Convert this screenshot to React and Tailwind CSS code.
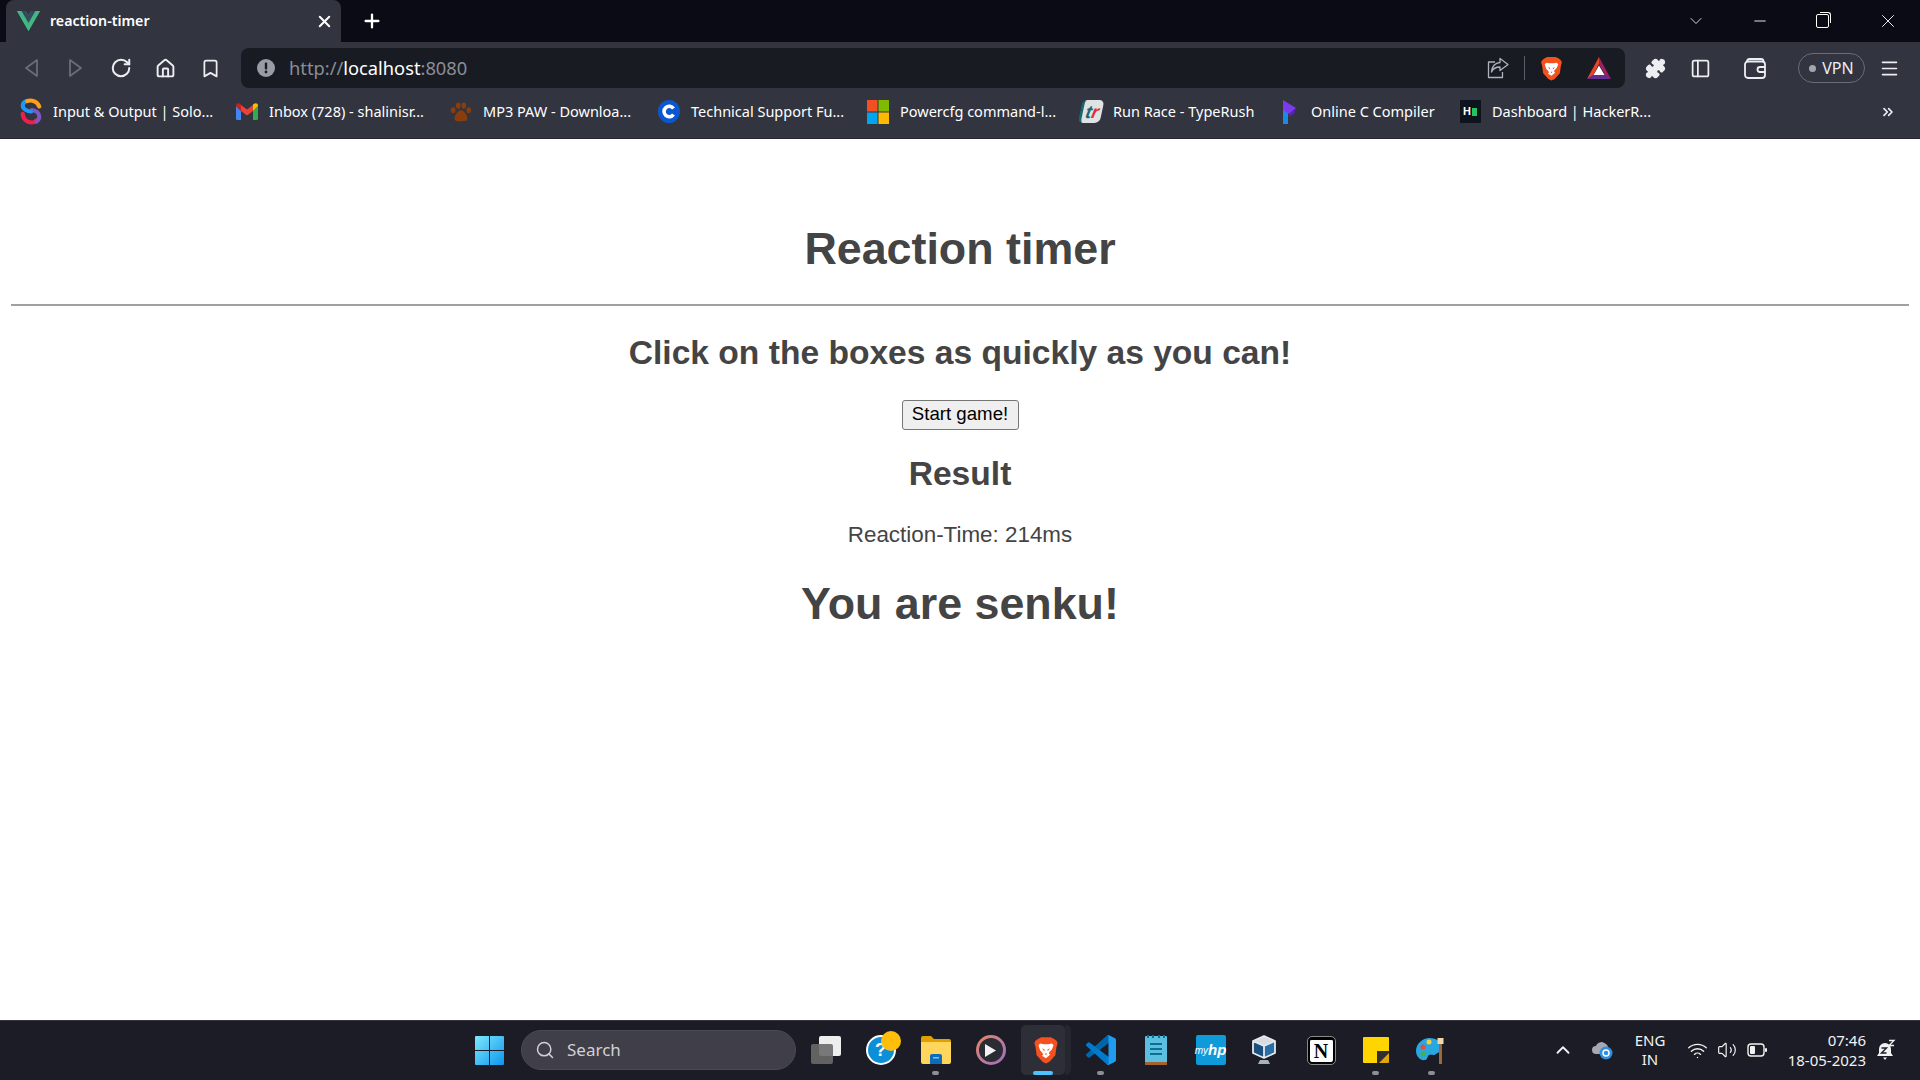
import { ChevronDown, Minus, X, Plus, RotateCw, Bookmark, Menu, ChevronUp, Wifi, Volume2, Search, PanelLeft, Puzzle, Home, ChevronsRight } from 'lucide-react'

function VueLogo({ size = 24 }) {
  return (
    <svg width={size} height={size * 0.87} viewBox="0 0 256 221">
      <path fill="#41b883" d="M204.8 0H256L128 220.8 0 0h97.92L128 51.2 157.44 0h47.36Z" />
      <path fill="#41b883" d="M0 0l128 220.8L256 0h-51.2L128 132.48 50.56 0H0Z" />
      <path fill="#35495e" d="M50.56 0L128 133.12 204.8 0h-47.36L128 51.2 97.92 0H50.56Z" />
    </svg>
  )
}

function BraveLogo({ size = 24 }) {
  return (
    <svg width={size} height={size} viewBox="0 0 24 24">
      <path fill="#f4511e" d="M5 2.500 8 1h8l3 1.500 2 1.500 1 2-1 3.500-1 7-5 5.500-3 1.500-3-1.500-5-5.500-1-7-1-3.500 1-2z" />
      <path fill="#fff" d="M7 6.500 10 7h4l3-.5 1.500 1.500-1.500 3.500-2 2-.5 1.500 1 1L12 19l-3.500-2 1-1-.5-1.500-2-2L5.500 8z" />
      <path fill="#f4511e" d="M8.500 10.500l2.300 1-.3 1.500zM15.500 10.500l-2.300 1 .3 1.500zM11 15h2l-1 1.500z" />
    </svg>
  )
}

function BatLogo() {
  return (
    <svg width="26" height="25" viewBox="0 0 26 25">
      <path fill="#e8442c" d="M13 1 1 23l6-3.500L13 8z" />
      <path fill="#9e1f63" d="M13 1l12 22-6-3.500L13 8z" />
      <path fill="#662d91" d="M1 23h24l-6-4H7z" />
      <path fill="#fff" d="M13 9.500 18.500 19h-11z" />
    </svg>
  )
}

// bookmark favicons
function SoloIcon() {
  return (
    <svg width="24" height="29" viewBox="0 0 24 29" fill="none" strokeLinecap="round">
      <path stroke="#ef1f4b" strokeWidth="4.500" d="M3 17c0 5 4 9.500 10 9.500 2 0 4-1 4.500-2" />
      <path stroke="#7e57c2" strokeWidth="4.500" d="M13 13c5 .5 8 3.500 8 7 0 2-1 4-3 5.500" />
      <path stroke="#2196f3" strokeWidth="4.500" d="M12 14.500C7 14 3 11.500 3 8c0-2.500 2-4.500 5-5" />
      <path stroke="#ffa01c" strokeWidth="4.500" d="M8 3c5-1.500 11 .5 13 6" />
    </svg>
  )
}

function GmailIcon() {
  return (
    <svg width="22" height="17" viewBox="0 0 22 17">
      <path fill="#4285f4" d="M0 3v12.500A1.500 1.500 0 0 0 1.500 17H5V8z" />
      <path fill="#34a853" d="M17 8v9h3.500a1.500 1.500 0 0 0 1.500-1.500V3z" />
      <path fill="#ea4335" d="M5 8V2l6 4.500L17 2v6l-6 4.500z" />
      <path fill="#c5221f" d="M0 3v-.500C0 .5 2.300-.500 4 .8L5 1.500V8z" />
      <path fill="#fbbc04" d="M22 3v-.500c0-2-2.300-3-4-1.700L17 1.500V8z" />
    </svg>
  )
}

function PawIcon() {
  return (
    <svg width="24" height="22" viewBox="0 0 24 22" fill="#8a3d0c">
      <ellipse cx="3.500" cy="9" rx="2.500" ry="3.300" />
      <ellipse cx="9" cy="4" rx="2.500" ry="3.500" />
      <ellipse cx="15" cy="4" rx="2.500" ry="3.500" />
      <ellipse cx="20.500" cy="9" rx="2.500" ry="3.300" />
      <path d="M12 9c-3 0-7 5-7 9 0 3 3 3.500 7 3s7 0 7-3c0-4-4-9-7-9z" />
    </svg>
  )
}

function CIcon() {
  return (
    <svg width="22" height="23" viewBox="0 0 22 23">
      <ellipse cx="11" cy="11.500" rx="11" ry="11.500" fill="#0b57d0" />
      <path fill="none" stroke="#fff" strokeWidth="3.600" d="M15.500 8.500a5.200 5.200 0 1 0 0 6" />
    </svg>
  )
}

function MsIcon() {
  return (
    <svg width="22" height="24" viewBox="0 0 22 24">
      <rect width="10.500" height="11.500" fill="#f25022" />
      <rect x="11.500" width="10.500" height="11.500" fill="#7fba00" />
      <rect y="12.500" width="10.500" height="11.500" fill="#00a4ef" />
      <rect x="11.500" y="12.500" width="10.500" height="11.500" fill="#ffb900" />
    </svg>
  )
}

function TrIcon() {
  return (
    <div className="w-[22px] h-[23px] rounded-[5px] bg-[#dfe3e4] border-l-[3px] border-[#17676f] flex items-center justify-center -skew-x-12">
      <span className="text-[18px] leading-none font-bold italic text-[#17676f] font-['Liberation_Sans',sans-serif]">t<span className="text-[#e0303a]">r</span></span>
    </div>
  )
}

function ProgramizIcon() {
  return (
    <svg width="22" height="24" viewBox="0 0 22 24">
      <path fill="#1e88e5" d="M5 10h5v14H5z" />
      <path fill="#7c3aed" d="M5 0l13 8-7 6-6-4z" />
      <path fill="#5b21b6" d="M11 14l7-6-2 6-5 3z" />
    </svg>
  )
}

function HackerIcon() {
  return (
    <div className="w-[21px] h-[23px] bg-[#0e141e] flex items-center justify-center gap-[1px]">
      <span className="text-[11px] leading-none font-bold text-white font-['Liberation_Sans',sans-serif]">H</span>
      <span className="w-[5px] h-[8px] bg-[#1ec760]" />
    </div>
  )
}

const BOOKMARKS = [
  { label: 'Input & Output | Solo...', icon: <SoloIcon />, width: 'w-[216px]' },
  { label: 'Inbox (728) - shalinisr...', icon: <GmailIcon />, width: 'w-[214px]' },
  { label: 'MP3 PAW - Downloa...', icon: <PawIcon />, width: 'w-[208px]' },
  { label: 'Technical Support Fu...', icon: <CIcon />, width: 'w-[209px]' },
  { label: 'Powercfg command-l...', icon: <MsIcon />, width: 'w-[213px]' },
  { label: 'Run Race - TypeRush', icon: <TrIcon />, width: 'w-[198px]' },
  { label: 'Online C Compiler', icon: <ProgramizIcon />, width: 'w-[181px]' },
  { label: 'Dashboard | HackerR...', icon: <HackerIcon />, width: 'w-[200px]' },
]

function TabStrip() {
  return (
    <div className="h-[42px] bg-[#0a0b14] flex text-white">
      <div className="ml-[6px] w-[335px] h-full bg-[#32343f] rounded-t-lg flex items-center pl-[11px] pr-[7px]">
        <VueLogo size={23} />
        <span className="ml-[10px] text-[14.2px] font-semibold flex-1">reaction-timer</span>
        <X size={19} strokeWidth={2.5} />
      </div>
      <div className="ml-[20px] flex items-center">
        <Plus size={22} strokeWidth={2.5} />
      </div>
      <div className="ml-auto flex">
        <div className="w-[64px] flex items-center justify-center"><ChevronDown size={20} strokeWidth={1} /></div>
        <div className="w-[64px] flex items-center justify-center"><Minus size={18} strokeWidth={1.2} /></div>
        <div className="w-[64px] flex items-center justify-center pr-[4px]">
          <div className="relative w-[13px] h-[14px] border border-white rounded-[2px]">
            <div className="absolute -top-[3px] -right-[3px] w-[11px] h-[11px] border-t border-r border-white rounded-tr-[3px]" />
          </div>
        </div>
        <div className="w-[64px] flex items-center justify-center"><X size={22} strokeWidth={1} /></div>
      </div>
    </div>
  )
}

function ToolBtn({ children, className = 'w-[45px]' }) {
  return <div className={`${className} h-full flex items-center justify-center text-[#eceef2]`}>{children}</div>
}

function Toolbar() {
  return (
    <div className="h-[46px] bg-[#32343f] flex items-center pt-[6px] pl-[8px]">
      <div className="h-[40px] flex items-center">
        <ToolBtn>
          <svg width="16" height="20" viewBox="0 0 16 20" fill="none" stroke="#6b6d78" strokeWidth="1.800" strokeLinejoin="round"><path d="M14 2v16L3 10z" /></svg>
        </ToolBtn>
        <ToolBtn>
          <svg width="16" height="20" viewBox="0 0 16 20" fill="none" stroke="#6b6d78" strokeWidth="1.800" strokeLinejoin="round"><path d="M2 2v16l11-8z" /></svg>
        </ToolBtn>
        <ToolBtn><RotateCw size={22} strokeWidth={2.2} /></ToolBtn>
        <ToolBtn><Home size={21} strokeWidth={2.2} /></ToolBtn>
        <ToolBtn><Bookmark size={21} strokeWidth={2} /></ToolBtn>
      </div>
      <div className="ml-[8px] w-[1384px] h-[40px] bg-[#191b23] rounded-lg flex items-center pl-[16px] pr-[13px]">
        <svg width="18" height="18" viewBox="0 0 18 18">
          <circle cx="9" cy="9" r="9" fill="#9a9ca5" />
          <rect x="7.800" y="3.500" width="2.400" height="7" rx="1" fill="#191b23" />
          <circle cx="9" cy="13" r="1.400" fill="#191b23" />
        </svg>
        <span className="ml-[14px] text-[18.3px] text-[#8b8d96] flex-1">http://<span className="text-white">localhost</span>:8080</span>
        <svg width="22" height="22" viewBox="0 0 22 22" fill="none" stroke="#b0b2ba" strokeWidth="1.300" strokeLinejoin="round" className="mr-[15px]">
          <path d="M8 5H1.500v15.500h14V15" />
          <path d="M13 1.500 21 7.500l-8 6v-3.500c-4 0-7 1.500-8.500 5 .5-5.500 3.500-9 8.500-9.500z" />
        </svg>
        <div className="w-px h-[24px] bg-[#5a5c66] mr-[14px]" />
        <BraveLogo size={25} />
        <div className="ml-[22px]"><BatLogo /></div>
      </div>
      <div className="flex-1 h-[40px] flex items-center text-[#eceef2]">
        <ToolBtn className="ml-[8px] w-[45px]"><Puzzle size={21} fill="#eceef2" /></ToolBtn>
        <ToolBtn className="w-[44px]"><PanelLeft size={21} strokeWidth={2} /></ToolBtn>
        <ToolBtn className="ml-[10px] w-[45px]">
          <svg width="22" height="21" viewBox="0 0 22 21" fill="none" stroke="#eceef2" strokeWidth="1.800">
            <path d="M3 3.500C3 2 4 1 5.500 1H17c1.500 0 2.500 1 2.500 2.500" />
            <rect x="1" y="3.500" width="20" height="16.500" rx="3" />
            <path d="M21 9h-5a2.500 2.500 0 0 0 0 5h5" />
          </svg>
        </ToolBtn>
        <div className="ml-[21px] w-[67px] h-[30px] rounded-full border border-[#6a6c77] flex items-center justify-center gap-[6px] text-[16px]">
          <span className="w-[7px] h-[7px] rounded-full bg-[#a3a5b0]" />
          VPN
        </div>
        <ToolBtn className="ml-[2px] w-[45px]"><Menu size={21} strokeWidth={1.8} /></ToolBtn>
      </div>
    </div>
  )
}

function BookmarksBar() {
  return (
    <div className="h-[51px] bg-[#32343f] flex items-center pl-[20px] pb-[3px] text-[14.5px] text-white border-b border-[#26272f]">
      {BOOKMARKS.map(b => (
        <div key={b.label} className={`${b.width} flex items-center`}>
          <div className="w-[22px] flex items-center justify-center shrink-0">{b.icon}</div>
          <span className="ml-[11px] whitespace-nowrap">{b.label}</span>
        </div>
      ))}
      <div className="ml-auto mr-[24px] text-[#eceef2]"><ChevronsRight size={16} strokeWidth={2.5} /></div>
    </div>
  )
}

function Page() {
  return (
    <main className="flex-1 bg-white text-center text-[#444] px-[11px] pt-[83px] font-['Liberation_Sans',Arial,sans-serif]">
      <h1 className="text-[44.8px] leading-[52px] font-bold mb-[30px]">Reaction timer</h1>
      <hr className="border-t-2 border-[#a0a0a0]" />
      <h2 className="mt-[28px] text-[33.6px] leading-[38px] font-bold">Click on the boxes as quickly as you can!</h2>
      <button className="mt-[28px] w-[117px] h-[30px] pb-[2px] bg-[#efefef] border border-[#767676] rounded-[3px] text-[18.67px] leading-none text-black">Start game!</button>
      <h2 className="mt-[25px] text-[33.6px] leading-[38px] font-bold">Result</h2>
      <p className="mt-[29px] text-[22.4px] leading-[26px]">Reaction-Time: 214ms</p>
      <h1 className="mt-[29px] text-[44.8px] leading-[52px] font-bold">You are senku!</h1>
    </main>
  )
}

function TaskSlot({ children, dot, className = '' }) {
  return (
    <div className={`relative w-[55px] h-[60px] flex items-center justify-center shrink-0 ${className}`}>
      {children}
      {dot && <span className="absolute bottom-[5px] w-[7px] h-[4px] rounded-full bg-[#8e8e96]" />}
    </div>
  )
}

function Taskbar() {
  return (
    <div className="relative h-[60px] bg-[#1c1c26] flex items-center text-white border-t border-[#33333d]">
      <div className="ml-[462px] flex items-center -mt-[1px]">
        <TaskSlot>
          <svg width="29" height="29" viewBox="0 0 29 29">
            <defs>
              <linearGradient id="win" x1="0" y1="0" x2="1" y2="1">
                <stop offset="0" stopColor="#7ee8fb" />
                <stop offset="1" stopColor="#0d95f0" />
              </linearGradient>
            </defs>
            <path fill="url(#win)" d="M0 1a1 1 0 0 1 1-1h13v14H0zM15 0h13a1 1 0 0 1 1 1v13H15zM0 15h14v14H1a1 1 0 0 1-1-1zM15 15h14v13a1 1 0 0 1-1 1H15z" />
          </svg>
        </TaskSlot>
        <div className="ml-[4px] w-[275px] h-[40px] rounded-full bg-[#3f3e49] border border-[#4a4954] flex items-center pl-[13px] text-[#d0d0d5] text-[17px]">
          <Search size={20} strokeWidth={1.8} />
          <span className="ml-[12px]">Search</span>
        </div>
        <div className="w-[2px]" />
        <TaskSlot>
          <div className="relative w-[30px] h-[28px]">
            <div className="absolute right-0 top-0 w-[22px] h-[20px] rounded-[2px] bg-[#eeeeee]" />
            <div className="absolute left-0 bottom-0 w-[22px] h-[20px] rounded-[2px] bg-[#6a6a6a]/90" />
          </div>
        </TaskSlot>
        <TaskSlot>
          <div className="relative w-[30px] h-[30px] rounded-full bg-[#0d8fd8] border-2 border-white flex items-center justify-center text-[18px] font-bold font-['Liberation_Sans',sans-serif]">
            ?
            <span className="absolute -top-[6px] -right-[7px] w-[20px] h-[20px] rounded-full bg-[#ffbe0b]" />
          </div>
        </TaskSlot>
        <TaskSlot dot>
          <svg width="30" height="28" viewBox="0 0 30 28">
            <path fill="#e0a100" d="M0 2a2 2 0 0 1 2-2h8l3 3h15a2 2 0 0 1 2 2v4H0z" />
            <path fill="#ffd65c" d="M0 6h30v20a2 2 0 0 1-2 2H2a2 2 0 0 1-2-2z" />
            <path fill="#0f6cbd" d="M9 20a2 2 0 0 1 2-2h8a2 2 0 0 1 2 2v8H9z" />
            <rect x="12" y="21" width="6" height="1.500" fill="#7cc4f0" />
          </svg>
        </TaskSlot>
        <TaskSlot>
          <div className="w-[30px] h-[30px] rounded-full bg-gradient-to-br from-[#e8845c] to-[#9b6cc4] p-[3px]">
            <div className="w-full h-full rounded-full bg-[#2b2b33] flex items-center justify-center">
              <svg width="13" height="15" viewBox="0 0 13 15"><path fill="#f2f2f2" d="M1 1v13l11-6.500z" /></svg>
            </div>
          </div>
        </TaskSlot>
        <TaskSlot>
          <div className="absolute left-[3px] top-[5px] w-[44px] h-[50px] rounded-[5px] bg-[#2e2e38]" />
          <div className="absolute left-[47px] top-[5px] w-[6px] h-[50px] rounded-r-[5px] bg-[#26262f]" />
          <div className="relative"><BraveLogo size={28} /></div>
          <span className="absolute bottom-[5px] left-[15px] w-[20px] h-[4px] rounded-full bg-[#4cc2ff]" />
        </TaskSlot>
        <TaskSlot dot>
          <svg width="30" height="30" viewBox="0 0 100 100">
            <path fill="#0065a9" d="M96.500 10.800 75.900.9a6.200 6.200 0 0 0-7.100 1.200L1.400 63.600a4.200 4.200 0 0 0 0 6.200l5.500 5a4.200 4.200 0 0 0 5.300.2L93.400 13.400a4.100 4.100 0 0 1 6.600 3.300v-.2a6.200 6.200 0 0 0-3.500-5.700z" />
            <path fill="#007acc" d="M96.500 89.200 75.900 99.100a6.200 6.200 0 0 1-7.100-1.200L1.400 36.400a4.200 4.200 0 0 1 0-6.200l5.500-5a4.200 4.200 0 0 1 5.300-.2l81.200 61.600a4.100 4.100 0 0 0 6.600-3.300v.2a6.200 6.200 0 0 1-3.500 5.700z" />
            <path fill="#1f9cf0" d="M75.900 99.100a6.200 6.200 0 0 1-7.100-1.200c2.300 2.300 6.200.7 6.200-2.600V4.700c0-3.300-3.900-4.900-6.200-2.600a6.200 6.200 0 0 1 7.100-1.200l20.600 9.900A6.200 6.200 0 0 1 100 16.400v67.200a6.200 6.200 0 0 1-3.500 5.600z" />
          </svg>
        </TaskSlot>
        <TaskSlot>
          <svg width="22" height="30" viewBox="0 0 22 30">
            <rect y="1" width="22" height="28" rx="1" fill="#5bbfe0" />
            <rect y="27" width="22" height="3" fill="#a5622c" />
            <path fill="#0d6f93" d="M2 0h2v3H2zM7 0h2v3H7zM13 0h2v3h-2zM18 0h2v3h-2z" />
            <path fill="#0d6f93" d="M5 8h12v2H5zM5 13h12v2H5zM5 18h12v2H5z" />
          </svg>
        </TaskSlot>
        <TaskSlot>
          <div className="w-[30px] h-[30px] rounded-[2px] bg-[#0f9ad9] flex items-center justify-center text-[10px] italic text-white font-['Liberation_Sans',sans-serif]">
            my<span className="text-[15px] font-bold">hp</span>
          </div>
        </TaskSlot>
        <TaskSlot className="pr-[4px]">
          <svg width="26" height="30" viewBox="0 0 26 30">
            <path fill="#d7dce2" d="M13 1 24 6 13 11 2 6z" />
            <path fill="#1a4f80" d="M2 6l11 5v12L2 18z" />
            <path fill="#2a6ea8" d="M24 6 13 11v12l11-5z" />
            <path fill="none" stroke="#e6e9ee" strokeWidth="1.800" strokeLinejoin="round" d="M13 1 24 6v12l-11 5-11-5V6zM2 6l11 5 11-5M13 11v12" />
            <path fill="#aab2bb" d="M9 25h8l2 4H7z" />
          </svg>
        </TaskSlot>
        <TaskSlot className="pl-[1px]">
          <div className="w-[27px] h-[27px] rounded-[4px] bg-white border-2 border-black border-t-[3px] outline outline-1 outline-[#8a8a8a] flex items-center justify-center text-black text-[20px] font-bold leading-none font-['Liberation_Serif',serif]">N</div>
        </TaskSlot>
        <TaskSlot dot>
          <svg width="26" height="26" viewBox="0 0 26 26">
            <path fill="#ffd500" d="M1 0h24a1 1 0 0 1 1 1v13L14 26H1a1 1 0 0 1-1-1V1a1 1 0 0 1 1-1z" />
            <path fill="#2f2f2f" d="M14 14h12v2L16 26h-2z" />
            <path fill="#e0a60b" d="M16 26l10-10v9a1 1 0 0 1-1 1z" />
          </svg>
        </TaskSlot>
        <TaskSlot dot className="pl-[1px]">
          <svg width="30" height="30" viewBox="0 0 30 30">
            <path fill="#2aa6e0" d="M14 3C6 3 0 9 0 16c0 6 5 10 9 9 3-.5 2-4 4-5s5 1 7-1c3-2 6-3 6-7 0-5-6-9-12-9z" />
            <circle cx="7" cy="12" r="2.500" fill="#e84a3c" />
            <circle cx="13" cy="7" r="2.500" fill="#ffc83d" />
            <circle cx="7" cy="19" r="2.500" fill="#47b04b" />
            <rect x="23" y="8" width="3" height="21" fill="#9a6a3a" />
            <rect x="21.500" y="3" width="6" height="6" fill="#f0d9a8" />
          </svg>
        </TaskSlot>
      </div>

      {/* system tray */}
      <div className="ml-auto flex items-center h-full -mt-[1px] text-[#f2f2f2] text-[15px]">
        <ChevronUp size={22} strokeWidth={2} className="mr-[17px]" />
        <svg width="22" height="20" viewBox="0 0 22 20" className="mr-[20px]">
          <path fill="#a8a8b0" d="M5 14a4 4 0 0 1 0-8 6 6 0 0 1 10-2 5 5 0 0 1 2 3l-5 7z" />
          <circle cx="15" cy="13" r="6.500" fill="#2f8fe0" />
          <circle cx="15" cy="13" r="3" fill="none" stroke="#fff" strokeWidth="1.500" />
        </svg>
        <div className="w-[34px] text-center leading-[19px]">ENG<br />IN</div>
        <Wifi size={21} strokeWidth={1.6} className="ml-[20px]" />
        <Volume2 size={20} strokeWidth={1.4} className="ml-[9px]" />
        <svg width="20" height="14" viewBox="0 0 20 14" fill="none" className="ml-[10px]">
          <rect x="1" y="1" width="16" height="12" rx="3" stroke="#f2f2f2" strokeWidth="1.400" />
          <rect x="3" y="3" width="5" height="8" rx="1" fill="#f2f2f2" />
          <rect x="18" y="5" width="2" height="4" rx="1" fill="#f2f2f2" />
        </svg>
        <div className="ml-[15px] w-[84px] text-right leading-[20px]">07:46<br />18-05-2023</div>
        <svg width="20" height="22" viewBox="0 0 20 22" className="ml-[10px] mr-[24px]">
          <path fill="#f2f2f2" d="M9 4a6 6 0 0 0-6 6v4l-2 3h16l-2-3v-4a6 6 0 0 0-6-6zM7 18.500h4L9 21z" />
          <path fill="none" stroke="#1c1c26" strokeWidth="1.400" d="M5.500 9h5l-5 5h5" />
          <path fill="none" stroke="#f2f2f2" strokeWidth="1.300" d="M13 1.500h5l-5 5h5" />
        </svg>
      </div>
    </div>
  )
}

export default function App() {
  return (
    <div className="w-full h-screen flex flex-col overflow-hidden font-['Noto_Sans',sans-serif]">
      <TabStrip />
      <Toolbar />
      <BookmarksBar />
      <Page />
      <Taskbar />
    </div>
  )
}
